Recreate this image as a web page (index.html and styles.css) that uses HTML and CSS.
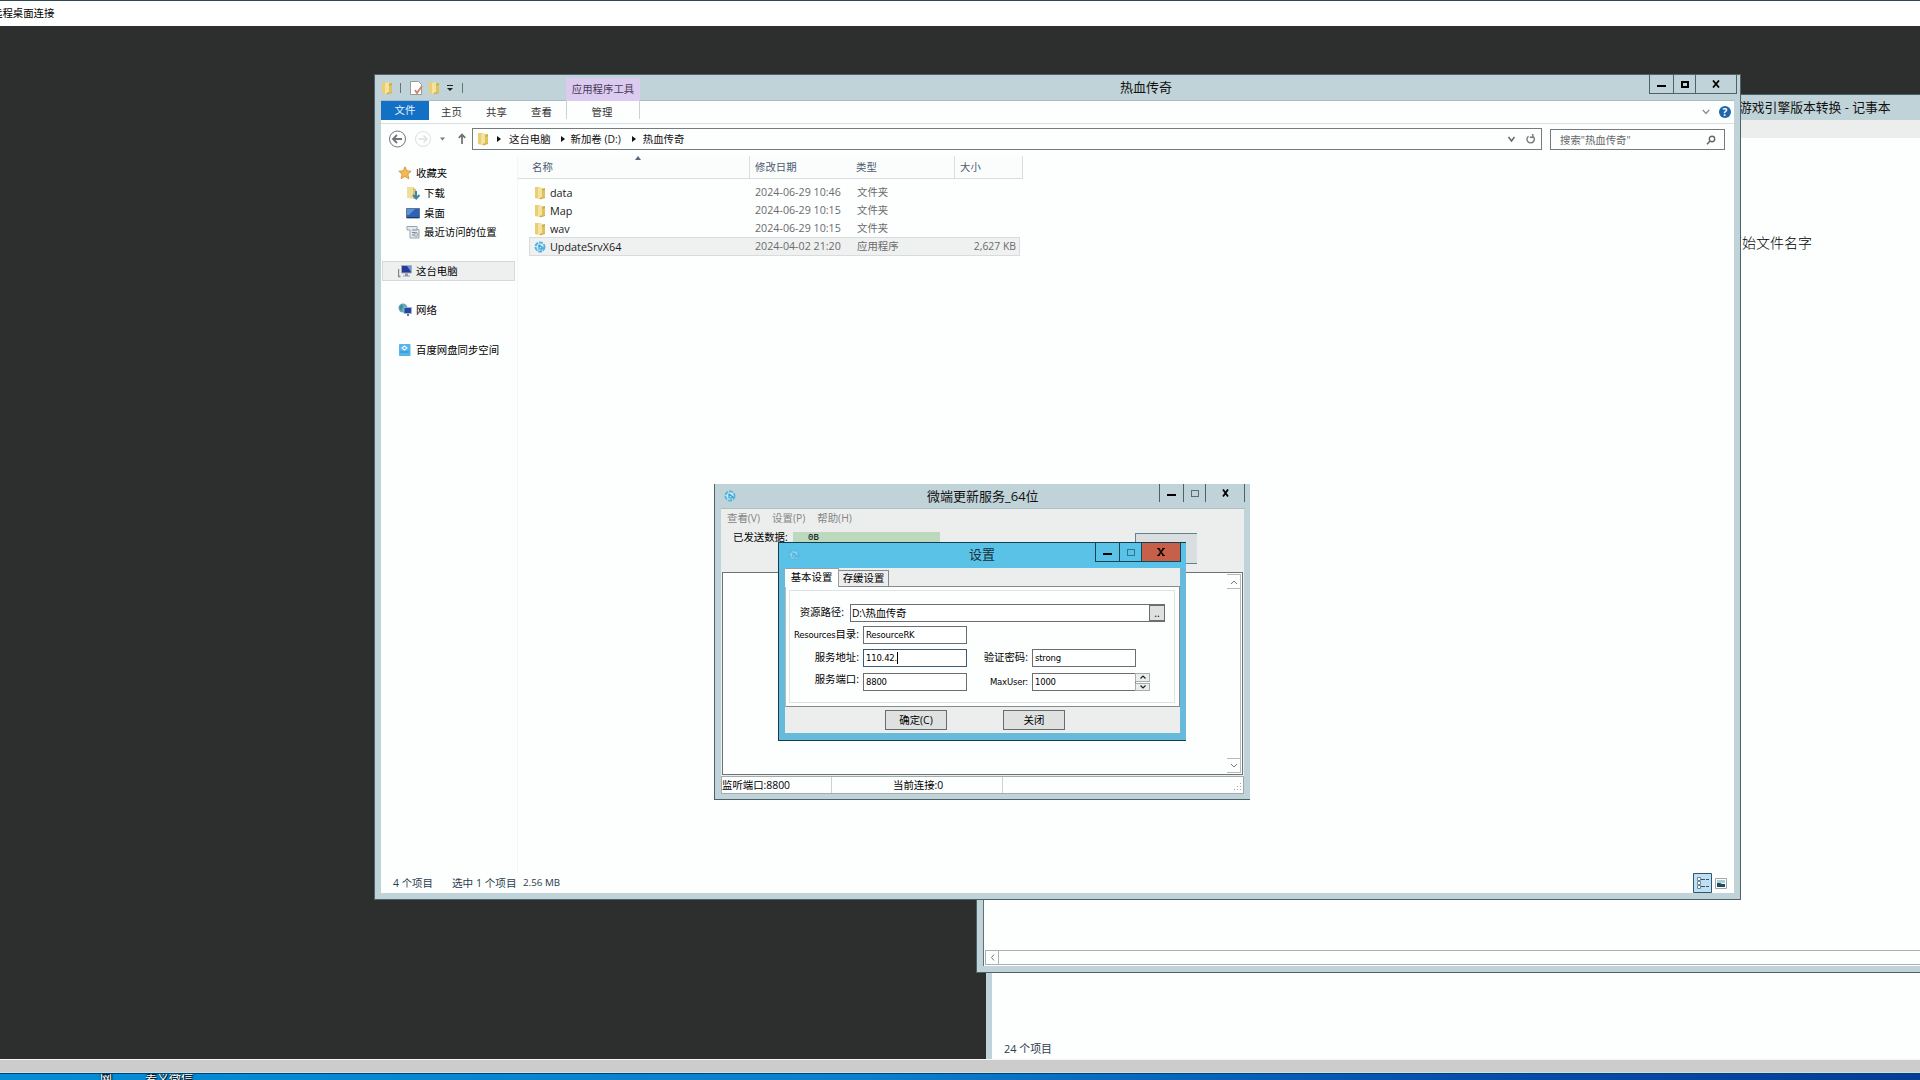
FILE: index.html
```html
<!DOCTYPE html>
<html lang="zh-CN">
<head>
    <meta charset="UTF-8">
    <title>远程桌面连接</title>
    <link rel="stylesheet" href="styles.css">
</head>
<body>
    <!-- Shared icons -->
    <svg class="defs" width="0" height="0">
        <symbol id="folder" viewBox="0 0 12 14">
            <path d="M1 1h4l1 1v11l-5-1z" fill="#e9cf72"/>
            <path d="M6 3l5-1v10l-5 1.5z" fill="#cfae48"/>
            <path d="M4 2l4-1v10l-4 2z" fill="#f3e3a0"/>
            <path d="M8 5l3-1v7l-3 1z" fill="#dfc25f"/>
        </symbol>
        <symbol id="app" viewBox="0 0 12 12">
            <circle cx="6" cy="6" r="4.6" fill="#c4e8f5" stroke="#55b2dc" stroke-width="1.8" stroke-dasharray="4 1"/>
            <path d="M5 3.5v5M5 4l4 3-2 .5v2" fill="none" stroke="#3f9fd0" stroke-width="1.3"/>
        </symbol>
    </svg>

    <header class="rdp-title">远程桌面连接</header>

    <main class="desktop">
        <section class="window back-window">
            <div class="back-body"><span>24 个项目</span></div>
        </section>

        <section class="window notepad">
            <div class="notepad-title">游戏引擎版本转换 - 记事本</div>
            <div class="notepad-menu"></div>
            <div class="notepad-body">
                <p>原始文件名字</p>
                <div class="hscroll">
                    <div class="hscroll-btn"><svg width="5" height="7" viewBox="0 0 5 7"><path d="M4 .5L1.5 3.5 4 6.5" fill="none" stroke="#777"/></svg></div>
                </div>
            </div>
        </section>

        <section class="window explorer">
            <div class="titlebar">
                <div class="quick">
                    <svg class="q1" width="12" height="14"><use href="#folder"/></svg>
                    <i class="vbar"></i>
                    <svg class="q2" width="13" height="14" viewBox="0 0 13 14"><path d="M.5.5h8l3 3v10H.5z" fill="#fff" stroke="#9a9a9a"/><path d="M5 9l2 3 5-7" fill="none" stroke="#d08a72" stroke-width="2"/></svg>
                    <svg class="q3" width="12" height="14"><use href="#folder"/></svg>
                    <svg class="q4" width="7" height="6" viewBox="0 0 7 6"><path d="M0 .5h6" stroke="#222"/><path d="M0 3h6L3 6z" fill="#222"/></svg>
                    <i class="vbar"></i>
                </div>
                <div class="tool-tab">应用程序工具</div>
                <div class="win-title">热血传奇</div>
                <div class="controls">
                    <span class="c-min"><i></i></span>
                    <span class="c-max"><i></i></span>
                    <span class="c-close"><svg width="8" height="8" viewBox="0 0 8 8"><path d="M1 .5l6 7M7 .5l-6 7" stroke="#000" stroke-width="1.8"/></svg></span>
                </div>
            </div>

            <div class="content">
                <nav class="ribbon">
                    <span class="file">文件</span>
                    <span class="rtab">主页</span>
                    <span class="rtab">共享</span>
                    <span class="rtab">查看</span>
                    <span class="rtab manage">管理</span>
                    <div class="ribbon-right">
                        <svg width="8" height="6" viewBox="0 0 8 6"><path d="M.8 1L4 4.4 7.2 1" fill="none" stroke="#8b9094" stroke-width="1.4"/></svg>
                        <span class="help">?</span>
                    </div>
                </nav>

                <div class="address-row">
                    <svg class="nav-icons" width="90" height="20" viewBox="0 0 90 20">
                        <circle cx="16.5" cy="10" r="8" fill="none" stroke="#71757a"/>
                        <path d="M21 10h-8.500M16 6l-4 4 4 4" fill="none" stroke="#71757a" stroke-width="1.800"/>
                        <circle cx="42" cy="10" r="7.500" fill="none" stroke="#dedede"/>
                        <path d="M37.500 10h8M42.500 6.500l3.500 3.500-3.500 3.500" fill="none" stroke="#dedede" stroke-width="1.300"/>
                        <path d="M59 8.500h5l-2.500 3z" fill="#777"/>
                        <path d="M81 15V6M77.800 8.800L81 5.500l3.200 3.300" fill="none" stroke="#6c6f73" stroke-width="1.700"/>
                    </svg>
                    <div class="address">
                        <svg width="12" height="14"><use href="#folder"/></svg>
                        <i class="crumb a1"></i><span>这台电脑</span>
                        <i class="crumb a2"></i><span>新加卷 (D:)</span>
                        <i class="crumb a3"></i><span>热血传奇</span>
                        <svg class="addr-tools" width="30" height="12" viewBox="0 0 30 12"><path d="M1.500 4l3 4 3-4" fill="none" stroke="#666" stroke-width="1.500"/><path d="M25.500 3a3.700 3.700 0 1 1-4 .200M25.800 1v3.200h-3" fill="none" stroke="#777" stroke-width="1.400"/></svg>
                    </div>
                    <div class="search">搜索"热血传奇"
                        <svg width="10" height="10" viewBox="0 0 10 10"><circle cx="6" cy="4" r="2.700" fill="none" stroke="#666" stroke-width="1.400"/><path d="M4 6L1 9.300" stroke="#666" stroke-width="1.600"/></svg>
                    </div>
                </div>

                <div class="panes">
                    <aside class="sidebar">
                        <div class="side">
                            <svg width="14" height="14" viewBox="0 0 14 14"><path d="M7 .8l1.800 4 4.400.400-3.300 3 1 4.600L7 10.400l-3.900 2.400 1-4.600-3.300-3 4.400-.400z" fill="#f6b850" stroke="#cf8f35" stroke-width=".8"/></svg>收藏夹</div>
                        <div class="side sub">
                            <svg width="14" height="14" viewBox="0 0 14 14"><path d="M1 1h7v12l-7-1z" fill="#f0df9a"/><path d="M7 2l3 1v9l-3 1z" fill="#dcc268"/><path d="M10 5v6M7 9l3.200 3.500L13.500 9" fill="none" stroke="#3c83ae" stroke-width="2"/></svg>下载</div>
                        <div class="side sub">
                            <svg width="14" height="14" viewBox="0 0 14 14"><path d="M.5 2.500h13v9.500H.5z" fill="#2e62b4" stroke="#5c7796"/><path d="M1 3h8L3 9H1z" fill="#5b92d8"/><path d="M1 11.500h12" stroke="#26384f"/></svg>桌面</div>
                        <div class="side sub">
                            <svg width="14" height="14" viewBox="0 0 14 14"><path d="M1 1.500h10v3h2v8.500H4V5H1z" fill="#e6eaed" stroke="#9aa5ad"/><path d="M6 5h5M6 7.500h5M6 10h3" stroke="#75899a"/><circle cx="10" cy="9.500" r="2" fill="#c9d7df" stroke="#8b99a3" stroke-width=".7"/></svg>最近访问的位置</div>
                        <div class="side selected">
                            <svg width="14" height="14" viewBox="0 0 14 14"><path d="M.5 5v7.500h2" fill="none" stroke="#7e8790" stroke-width="1.400"/><path d="M3.500 1.500h10v7.500h-10z" fill="#263b96" stroke="#a4afbd"/><path d="M9 2h4v6z" fill="#6f93dc"/><path d="M7 9.500h3v2h2v1H5v-1h2z" fill="#9099a3"/></svg>这台电脑</div>
                        <div class="side network">
                            <svg width="14" height="14" viewBox="0 0 14 14"><circle cx="5" cy="5" r="4.500" fill="#62a9c9"/><path d="M1 4l3-3 1 3-2 4z" fill="#3f9186"/><path d="M6 4.500h7.500v6H6z" fill="#2745a0" stroke="#a8b7cc" stroke-width=".8"/><path d="M9 11h2v2H9z" fill="#6b7582"/></svg>网络</div>
                        <div class="side baidu">
                            <svg width="14" height="14" viewBox="0 0 14 14"><rect x="1" y="1" width="11.500" height="12" rx="1" fill="#55b4ea"/><path d="M4 5l2.500-2L9 5 6.500 7z" fill="none" stroke="#e9f7ff" stroke-width="1.200"/><path d="M2 9h9" stroke="#3f9fdf" stroke-width="2"/></svg>百度网盘同步空间</div>
                    </aside>

                    <div class="files">
                        <div class="file-head">
                            <span class="name">名称</span><span class="date">修改日期</span><span class="type">类型</span><span class="size">大小</span>
                            <i class="sort"></i>
                        </div>
                        <div class="file-row"><svg width="12" height="14"><use href="#folder"/></svg><span class="name">data</span><span class="date">2024-06-29 10:46</span><span class="type">文件夹</span><span class="size"></span></div>
                        <div class="file-row"><svg width="12" height="14"><use href="#folder"/></svg><span class="name">Map</span><span class="date">2024-06-29 10:15</span><span class="type">文件夹</span><span class="size"></span></div>
                        <div class="file-row"><svg width="12" height="14"><use href="#folder"/></svg><span class="name">wav</span><span class="date">2024-06-29 10:15</span><span class="type">文件夹</span><span class="size"></span></div>
                        <div class="file-row active"><svg width="12" height="12"><use href="#app"/></svg><span class="name">UpdateSrvX64</span><span class="date">2024-04-02 21:20</span><span class="type">应用程序</span><span class="size">2,627 KB</span></div>
                    </div>
                </div>

                <footer class="explorer-status">
                    <span class="s1">4 个项目</span><span class="s2">选中 1 个项目</span><span class="s3">2.56 MB</span>
                    <div class="views">
                        <svg width="19" height="20" viewBox="0 0 19 20"><path d="M.5.5h18v19H.5z" fill="#bfe0f2" stroke="#31566e"/><path d="M4.500 4.500h3v3h-3zM4.500 8.500h3v3h-3zM4.500 12.500h3v3h-3z" fill="#fff" stroke="#6b8799"/><path d="M8 6.500h4m1 0h3M8 13.500h4m1 0h3" stroke="#31566e"/></svg>
                        <svg width="12" height="11" viewBox="0 0 12 11"><path d="M.5.5h11v10H.5z" fill="#fff" stroke="#9aa7ad"/><path d="M2 2h8v3H2z" fill="#a5d3d8"/><path d="M2 5h3l2 1h3v3H2z" fill="#284a56"/></svg>
                    </div>
                </footer>
            </div>
        </section>

        <section class="window updater">
            <div class="up-title">
                <svg width="12" height="12"><use href="#app"/></svg>
                <div class="win-title">微端更新服务_64位</div>
                <div class="controls">
                    <span class="c-min"><i></i></span>
                    <span class="c-max dim"><i></i></span>
                    <span class="c-close"><svg width="7" height="8" viewBox="0 0 7 8"><path d="M1 .5l5 7M6 .5l-5 7" stroke="#000" stroke-width="1.800"/></svg></span>
                </div>
            </div>
            <div class="up-content">
                <div class="up-menu"><span>查看(V)</span><span>设置(P)</span><span>帮助(H)</span></div>
                <div class="up-sent">
                    <span class="sent-label">已发送数据:</span><span class="sent-value">0B</span><span class="up-btn"></span>
                </div>
                <div class="up-log">
                    <div class="vscroll">
                        <span><svg width="8" height="6" viewBox="0 0 8 6"><path d="M1 5l3-3 3 3" fill="none" stroke="#777"/></svg></span>
                        <span><svg width="8" height="6" viewBox="0 0 8 6"><path d="M1 1l3 3 3-3" fill="none" stroke="#777"/></svg></span>
                    </div>
                </div>
                <div class="up-status">
                    <span class="u1">监听端口:8800</span><span class="u2">当前连接:0</span>
                    <svg width="9" height="9" viewBox="0 0 9 9"><path d="M7 1h1v1H7zM4 4h1v1H4zM7 4h1v1H7zM1 7h1v1H1zM4 7h1v1H4zM7 7h1v1H7z" fill="#a0a8aa"/></svg>
                </div>
            </div>
        </section>

        <section class="window dialog">
            <div class="dlg-title">
                <svg width="12" height="12"><use href="#app"/></svg>
                <div class="win-title">设置</div>
                <div class="controls blue">
                    <span class="c-min"><i></i></span>
                    <span class="c-max dim"><i></i></span>
                    <span class="c-close"><svg width="8" height="8" viewBox="0 0 8 8"><path d="M1.500 .5l5 7M6.500 .5l-5 7" stroke="#200c08" stroke-width="1.700"/><path d="M0 .5h3M5 .5h3M0 7.500h3M5 7.500h3" stroke="#200c08"/></svg></span>
                </div>
            </div>
            <div class="dlg-content">
                <div class="tabs"><span class="tab on">基本设置</span><span class="tab">存缓设置</span></div>
                <div class="page">
                    <div class="group">
                        <div class="row path">
                            <label>资源路径:</label>
                            <div class="input"><span>D:\热血传奇</span><button>..</button></div>
                        </div>
                        <div class="row">
                            <label><b>Resources</b>目录:</label>
                            <div class="input latin">ResourceRK</div>
                        </div>
                        <div class="row addr">
                            <label>服务地址:</label>
                            <div class="input latin focus">110.42.<i class="caret"></i></div>
                            <label class="right">验证密码:</label>
                            <div class="input latin">strong</div>
                        </div>
                        <div class="row port">
                            <label class="up">服务端口:</label>
                            <div class="input latin">8800</div>
                            <label class="right"><b>MaxUser:</b></label>
                            <div class="input latin">1000</div>
                            <div class="spin">
                                <span><svg width="6" height="4" viewBox="0 0 6 4"><path d="M.5 3.500L3 1l2.500 2.500" fill="none" stroke="#222" stroke-width="1.200"/></svg></span>
                                <span><svg width="6" height="4" viewBox="0 0 6 4"><path d="M.5.5L3 3 5.500.5" fill="none" stroke="#222" stroke-width="1.200"/></svg></span>
                            </div>
                        </div>
                    </div>
                </div>
                <div class="actions"><button>确定(C)</button><button>关闭</button></div>
            </div>
        </section>
    </main>

    <div class="rdp-scroll"></div>
    <footer class="host-desktop"><span class="h1">网</span><span class="h2">麦义微信..</span></footer>
</body>
</html>
```
FILE: styles.css
```css
* {
    margin: 0;
    padding: 0;
    box-sizing: border-box;
}

body {
    width: 1920px;
    height: 1080px;
    overflow: hidden;
    display: flex;
    flex-direction: column;
    background: #2d2f2e;
    color: #111;
    font-family: "Open Sans", "Noto Sans CJK SC", sans-serif;
    font-size: 10.4px;
    line-height: 14px;
    white-space: nowrap;
}

svg {
    display: block;
    flex: none;
}

.defs {
    position: absolute;
}

i, b {
    font-style: normal;
    font-weight: normal;
}

button {
    font: inherit;
    color: inherit;
}

.rdp-title {
    height: 26px;
    flex: none;
    border-top: 1px solid #2b4a52;
    background: #fff;
    line-height: 24px;
    text-indent: -8px;
    color: #000;
}

.desktop {
    flex: 1;
    background: #2d2f2e;
}

.window {
    position: absolute;
    display: flex;
    flex-direction: column;
    background: #c0d3d8;
}

.win-title {
    font-size: 13px;
    line-height: 18px;
    color: #111;
}

/* Caption buttons */
.controls {
    display: flex;
    height: 19px;
    border: 1px solid #4d6268;
    border-top: 0;
}

.controls span {
    display: flex;
    align-items: center;
    justify-content: center;
    border-right: 1px solid #4d6268;
}

.controls span:last-child {
    border-right: 0;
}

.c-min {
    width: 24px;
}

.c-min i {
    width: 9px;
    height: 2px;
    margin-top: 4px;
    background: #000;
}

.c-max {
    width: 22px;
}

.c-max i {
    width: 8px;
    height: 7px;
    border: 2px solid #000;
}

.c-max.dim i {
    border: 1.5px solid #577078;
}

.c-close {
    flex: 1;
}

/* Window at the very back */
.back-window {
    left: 986px;
    top: 960px;
    width: 934px;
    height: 100px;
    padding-left: 6px;
}

.back-body {
    flex: 1;
    padding: 82px 0 0 12px;
    background: #fdfefe;
    color: #2c3c4c;
    font-size: 10.9px;
}

/* Notepad */
.notepad {
    left: 976px;
    top: 94px;
    width: 944px;
    height: 879px;
    padding: 0 0 6px 6px;
    border: 1px solid #4d6268;
    border-right: 0;
}

.notepad-title {
    height: 25px;
    padding-left: 756px;
    font-size: 12.8px;
    line-height: 25px;
}

.notepad-menu {
    height: 18px;
    background: #eceeee;
}

.notepad-body {
    flex: 1;
    display: flex;
    flex-direction: column;
    justify-content: space-between;
    padding: 94px 0 1px 1px;
    border-left: 1px solid #5d7076;
    background: #fdfefe;
    font-family: "Noto Sans CJK SC", sans-serif;
    font-size: 14px;
    font-weight: 300;
    line-height: 20px;
    color: #000;
}

.notepad-body p {
    padding-left: 743px;
}

.hscroll {
    height: 15px;
    border: 1px solid #a9b0b2;
    border-right: 0;
}

.hscroll-btn {
    width: 13px;
    height: 13px;
    display: flex;
    align-items: center;
    justify-content: center;
    border-right: 1px solid #a9b0b2;
}

/* Explorer */
.explorer {
    left: 374px;
    top: 74px;
    width: 1367px;
    height: 826px;
    padding: 0 6px 6px;
    border: 1px solid #4d6268;
}

.titlebar {
    height: 26px;
    display: flex;
    border-bottom: 1px solid #aabcc1;
}

.quick {
    width: 185px;
    height: 26px;
    display: flex;
    align-items: center;
}

.vbar {
    width: 1px;
    height: 10px;
    background: #62757b;
}

.q1 {
    margin-right: 7px;
}

.q2 {
    margin: 0 5px 0 9px;
}

.q4 {
    margin: 0 8px 0 7px;
}

.tool-tab {
    width: 74px;
    height: 23px;
    margin-top: 3px;
    background: #dccbf0;
    color: #473a55;
    line-height: 22px;
    text-align: center;
}

.explorer .win-title {
    flex: 1;
    padding: 3px 0 0 480px;
}

.explorer .controls {
    width: 88px;
    margin-right: -3px;
}

.content {
    flex: 1;
    display: flex;
    flex-direction: column;
    background: #fdfefe;
}

.ribbon {
    height: 23px;
    display: flex;
    flex: none;
    border-bottom: 1px solid #dbdfe0;
    color: #333;
}

.ribbon > span {
    line-height: 22px;
}

.file {
    width: 48px;
    height: 19px;
    background: #1271c5;
    color: #e8f4ff;
    text-align: center;
}

.ribbon > .file {
    line-height: 19px;
}

.rtab {
    width: 45px;
    text-align: center;
}

.manage {
    width: 74px;
    height: 18px;
    margin-left: 2px;
    padding-right: 2px;
    border-left: 1px solid #ccd1d3;
    border-right: 1px solid #ccd1d3;
}

.ribbon-right {
    display: flex;
    align-items: center;
    gap: 9px;
    margin: 0 3px 0 auto;
}

.help {
    width: 12px;
    height: 12px;
    border-radius: 50%;
    background: #1d66ac;
    color: #fff;
    font-size: 10px;
    font-weight: bold;
    line-height: 12px;
    text-align: center;
}

.address-row {
    height: 32px;
    display: flex;
    flex: none;
    padding-top: 4px;
}

.nav-icons {
    margin: 1px 1px 0 0;
}

.address {
    width: 1070px;
    height: 22px;
    display: flex;
    align-items: center;
    padding: 0 0 1px 4px;
    border: 1px solid #777b7d;
}

.crumb {
    width: 0;
    height: 0;
    border: 3.5px solid transparent;
    border-left: 4px solid #111;
    border-right: 0;
}

.a1 {
    margin: 0 8px;
}

.a2 {
    margin: 0 6px 0 10px;
}

.a3 {
    margin: 0 7px 0 11px;
}

.addr-tools {
    margin: 1px 4px 0 auto;
}

.search {
    width: 175px;
    height: 21px;
    margin: 1px 0 0 8px;
    display: flex;
    align-items: center;
    justify-content: space-between;
    padding: 0 8px 0 9px;
    border: 1px solid #777b7d;
    color: #666;
}

.panes {
    flex: 1;
    display: flex;
}

.sidebar {
    width: 137px;
    padding: 7px 0 0 1px;
    border-right: 1px solid #f3f5f6;
}

.side {
    display: flex;
    align-items: center;
    gap: 4px;
    width: 133px;
    height: 20px;
    padding-left: 16px;
    color: #000;
}

.side.sub {
    padding-left: 24px;
    height: 19.7px;
}

.side.selected {
    margin-top: 19px;
    padding-left: 15px;
    border: 1px solid #d6d9da;
    background: #eef0f0;
}

.network {
    margin-top: 19px;
}

.baidu {
    margin-top: 20px;
}

.file-head {
    position: relative;
    width: 505px;
    height: 23px;
    margin: 0 0 5px;
    display: flex;
    padding-left: 14px;
    border-right: 1px solid #d9dddf;
    border-bottom: 1px solid #d9dddf;
    background: #fbfcfc;
    color: #4a5a70;
    line-height: 22px;
}

.file-head .name {
    width: 218px;
    border-right: 1px solid #d9dddf;
}

.file-head .date {
    width: 106px;
    padding-left: 5px;
}

.file-head .type {
    width: 99px;
    border-right: 1px solid #d9dddf;
}

.file-head .size {
    padding-left: 5px;
}

.sort {
    position: absolute;
    left: 117px;
    top: 0;
    border: 3.5px solid transparent;
    border-top: 0;
    border-bottom: 4px solid #56667c;
}

.file-row {
    display: flex;
    align-items: center;
    width: 491px;
    height: 18px;
    margin-left: 11px;
    padding: 0 4px 0 5px;
    color: #6b6b6b;
    line-height: 17px;
}

.file-row span {
    height: 18px;
}

.file-row .name {
    width: 209px;
    padding-left: 4px;
    color: #1a1a1a;
    font-size: 10.8px;
}

.file-row .date {
    width: 102px;
    font-size: 10.7px;
}

.file-row .type {
    width: 102px;
}

.file-row .size {
    flex: 1;
    text-align: right;
}

.file-row.active {
    height: 19px;
    margin-top: -1px;
    padding: 0 3px 0 4px;
    border: 1px solid #d9dcdc;
    background: #eff0f0;
}

.explorer-status {
    height: 20px;
    display: flex;
    padding-left: 12px;
    color: #2c3c4c;
    line-height: 20px;
}

.s1 {
    width: 59px;
}

.s2 {
    width: 71px;
    font-size: 10.6px;
}

.s3 {
    font-size: 9.8px;
}

.views {
    display: flex;
    align-items: center;
    gap: 3px;
    margin: 0 7px 0 auto;
}

/* Update service */
.updater {
    left: 714px;
    top: 484px;
    width: 536px;
    height: 316px;
    padding: 0 6px 7px;
    border-left: 1px solid #4d6268;
    border-bottom: 1px solid #4d6268;
}

.up-title {
    height: 25px;
    display: flex;
    flex: none;
    margin-right: -1px;
    padding: 0 0 0 3px;
    border-bottom: 1px solid #aebfc4;
}

.up-title > svg {
    margin-top: 6px;
}

.up-title .win-title {
    flex: 1;
    padding: 3px 0 0 191px;
}

.up-title .controls {
    width: 86px;
    height: 18px;
    border-bottom: 0;
}

.up-content {
    flex: 1;
    display: flex;
    flex-direction: column;
    background: #eceeee;
}

.up-menu {
    height: 22px;
    display: flex;
    gap: 12px;
    padding-left: 6px;
    color: #858585;
    line-height: 18px;
}

.up-sent {
    height: 41px;
    display: flex;
    padding-left: 12px;
    color: #000;
}

.sent-label {
    width: 60px;
    margin-top: -1px;
}

.sent-value {
    width: 147px;
    height: 14px;
    margin-top: 1px;
    padding-left: 15px;
    background: #bcd8bd;
    font-family: "Liberation Mono", monospace;
    font-size: 9px;
    line-height: 13px;
}

.up-btn {
    width: 62px;
    height: 31px;
    margin: 2px 0 0 195px;
    background: #d9dfe1;
    border: 1px solid #63818c;
    border-right: 0;
}

.up-log {
    height: 203px;
    display: flex;
    justify-content: flex-end;
    margin: 0 1px;
    padding: 1px 1px 1px 2px;
    border: 1px solid #6c7375;
    background: #fdfefe;
}

.vscroll {
    display: flex;
    flex-direction: column;
    justify-content: space-between;
    border-right: 1px solid #b5babb;
}

.vscroll span {
    width: 13px;
    height: 15px;
    display: flex;
    align-items: center;
    justify-content: center;
    border-top: 1px solid #b5babb;
    border-bottom: 1px solid #b5babb;
}

.up-status {
    flex: 1;
    display: flex;
    margin-top: 1px;
    border: 1px solid #a3abae;
    background: #fdfefe;
    color: #000;
    line-height: 16px;
}

.u1 {
    width: 110px;
    border-right: 1px solid #cdd2d3;
}

.u2 {
    width: 171px;
    padding-left: 61px;
    border-right: 1px solid #cdd2d3;
}

.up-status svg {
    margin: 5px 1px 0 auto;
}

/* Settings dialog */
.dialog {
    left: 778px;
    top: 542px;
    width: 408px;
    height: 199px;
    padding: 0 6px 7px;
    border: 1px solid #123e50;
    border-right: 0;
    background: #68badb;
}

.dlg-title {
    height: 25px;
    display: flex;
    margin: 0 -6px;
    padding: 0 5px 0 9px;
    background: #5bc2e7;
}

.dlg-title > svg {
    margin-top: 6px;
    opacity: .45;
}

.dlg-title .win-title {
    flex: 1;
    padding: 2px 0 0 169px;
    color: #17303c;
}

.controls.blue {
    width: 86px;
    border-color: #174456;
}

.controls.blue span {
    border-color: #174456;
}

.controls.blue .dim i {
    border-color: #2f7690;
}

.controls.blue .c-close {
    background: #c7604b;
}

.dlg-content {
    flex: 1;
    display: flex;
    flex-direction: column;
    background: #eceeee;
    color: #000;
}

.tabs {
    height: 18px;
    display: flex;
    align-items: flex-end;
}

.tab {
    width: 50px;
    height: 16px;
    border: 1px solid #858b8d;
    border-left: 0;
    border-bottom: 0;
    line-height: 15px;
    text-align: center;
}

.tab.on {
    width: 54px;
    height: 19px;
    margin-bottom: -1px;
    border-color: #9ba1a3;
    background: #fdfefe;
    line-height: 16px;
    z-index: 1;
}

.page {
    height: 121px;
    padding: 3px 4px 5px 3px;
    border: 1px solid #858b8d;
    border-left-color: #b6bcbe;
    background: #fdfefe;
}

.group {
    height: 113px;
    padding: 13px 0 0;
    border: 1px solid #dfe3e4;
}

.row {
    height: 22px;
    display: flex;
    align-items: flex-start;
}

.row.addr {
    margin-top: 1px;
    height: 24px;
}

.row label {
    width: 73px;
    padding-right: 4px;
    line-height: 17px;
    text-align: right;
}

.row b, .latin {
    font-family: "DejaVu Sans", sans-serif;
    font-size: 8.5px;
    letter-spacing: -.2px;
}

.row .up {
    margin-top: -2px;
}

.row label.right {
    width: 65px;
}

.row.path label {
    width: 60px;
    padding-right: 6px;
}

.input {
    width: 104px;
    height: 18px;
    display: flex;
    align-items: center;
    padding-left: 2px;
    border: 1px solid #6a6e70;
    background: #fff;
}

.path .input {
    width: 315px;
    padding-left: 1px;
    justify-content: space-between;
    border-right: 0;
    letter-spacing: -.2px;
}

.path button {
    width: 16px;
    height: 16px;
    border: 1px solid #6a6e70;
    background: #dfe1e1;
    line-height: 12px;
}

.input.focus {
    border-color: #3c5a72;
}

.caret {
    width: 1px;
    height: 12px;
    background: #000;
}

.spin {
    display: flex;
    flex-direction: column;
    gap: 1px;
    margin-left: -1px;
}

.spin span {
    width: 15px;
    height: 8.5px;
    display: flex;
    align-items: center;
    justify-content: center;
    border: 1px solid #a7acae;
    background: #eceeee;
}

.actions {
    display: flex;
    gap: 56px;
    padding: 3px 0 0 100px;
}

.actions button {
    width: 62px;
    height: 20px;
    border: 1px solid #686c6e;
    background: #dfe1e1;
}

/* Local machine below the session */
.rdp-scroll {
    position: relative;
    height: 14px;
    flex: none;
    border-top: 1px solid #f4f5f5;
    border-bottom: 1px solid #bfe3f0;
    background: #cbcccb;
}

.host-desktop {
    height: 7px;
    flex: none;
    display: flex;
    overflow: hidden;
    padding-left: 100px;
    border-top: 1px solid #10405f;
    background: linear-gradient(90deg, #058cd6, #0a7fce 45%, #064fae 75%, #063c98);
    color: #fff;
    font-size: 12px;
    line-height: 10px;
    text-shadow: 0 0 2px #000, 1px 1px 1px #000;
}

.h1 {
    width: 45px;
}
```
